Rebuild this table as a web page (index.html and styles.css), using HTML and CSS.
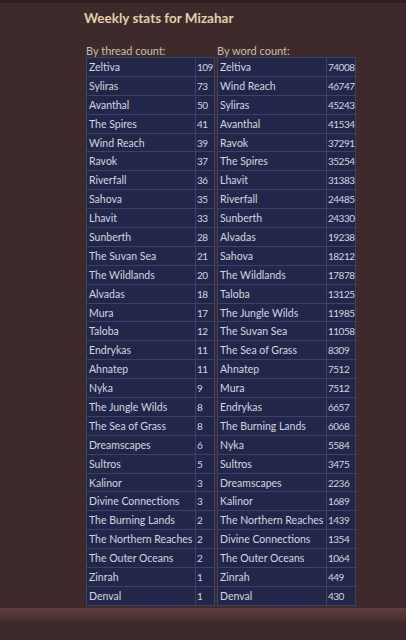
FILE: index.html
```html
<!DOCTYPE html>
<html>
<head>
<meta charset="utf-8">
<link rel="stylesheet" href="styles.css">
</head>
<body>
<div class="topbar"></div>
<main class="content">
  <h1 class="title">Weekly stats for Mizahar</h1>
  <div class="tables">
    <section class="block">
      <div class="label">By thread count:</div>
      <table class="stats thread">
        <tr><td class="name">Zeltiva</td><td class="num">109</td></tr>
        <tr><td class="name">Syliras</td><td class="num">73</td></tr>
        <tr><td class="name">Avanthal</td><td class="num">50</td></tr>
        <tr><td class="name">The Spires</td><td class="num">41</td></tr>
        <tr><td class="name">Wind Reach</td><td class="num">39</td></tr>
        <tr><td class="name">Ravok</td><td class="num">37</td></tr>
        <tr><td class="name">Riverfall</td><td class="num">36</td></tr>
        <tr><td class="name">Sahova</td><td class="num">35</td></tr>
        <tr><td class="name">Lhavit</td><td class="num">33</td></tr>
        <tr><td class="name">Sunberth</td><td class="num">28</td></tr>
        <tr><td class="name">The Suvan Sea</td><td class="num">21</td></tr>
        <tr><td class="name">The Wildlands</td><td class="num">20</td></tr>
        <tr><td class="name">Alvadas</td><td class="num">18</td></tr>
        <tr><td class="name">Mura</td><td class="num">17</td></tr>
        <tr><td class="name">Taloba</td><td class="num">12</td></tr>
        <tr><td class="name">Endrykas</td><td class="num">11</td></tr>
        <tr><td class="name">Ahnatep</td><td class="num">11</td></tr>
        <tr><td class="name">Nyka</td><td class="num">9</td></tr>
        <tr><td class="name">The Jungle Wilds</td><td class="num">8</td></tr>
        <tr><td class="name">The Sea of Grass</td><td class="num">8</td></tr>
        <tr><td class="name">Dreamscapes</td><td class="num">6</td></tr>
        <tr><td class="name">Sultros</td><td class="num">5</td></tr>
        <tr><td class="name">Kalinor</td><td class="num">3</td></tr>
        <tr><td class="name">Divine Connections</td><td class="num">3</td></tr>
        <tr><td class="name">The Burning Lands</td><td class="num">2</td></tr>
        <tr><td class="name">The Northern Reaches</td><td class="num">2</td></tr>
        <tr><td class="name">The Outer Oceans</td><td class="num">2</td></tr>
        <tr><td class="name">Zinrah</td><td class="num">1</td></tr>
        <tr><td class="name">Denval</td><td class="num">1</td></tr>
      </table>
    </section>
    <section class="block">
      <div class="label">By word count:</div>
      <table class="stats word">
        <tr><td class="name">Zeltiva</td><td class="num">74008</td></tr>
        <tr><td class="name">Wind Reach</td><td class="num">46747</td></tr>
        <tr><td class="name">Syliras</td><td class="num">45243</td></tr>
        <tr><td class="name">Avanthal</td><td class="num">41534</td></tr>
        <tr><td class="name">Ravok</td><td class="num">37291</td></tr>
        <tr><td class="name">The Spires</td><td class="num">35254</td></tr>
        <tr><td class="name">Lhavit</td><td class="num">31383</td></tr>
        <tr><td class="name">Riverfall</td><td class="num">24485</td></tr>
        <tr><td class="name">Sunberth</td><td class="num">24330</td></tr>
        <tr><td class="name">Alvadas</td><td class="num">19238</td></tr>
        <tr><td class="name">Sahova</td><td class="num">18212</td></tr>
        <tr><td class="name">The Wildlands</td><td class="num">17878</td></tr>
        <tr><td class="name">Taloba</td><td class="num">13125</td></tr>
        <tr><td class="name">The Jungle Wilds</td><td class="num">11985</td></tr>
        <tr><td class="name">The Suvan Sea</td><td class="num">11058</td></tr>
        <tr><td class="name">The Sea of Grass</td><td class="num">8309</td></tr>
        <tr><td class="name">Ahnatep</td><td class="num">7512</td></tr>
        <tr><td class="name">Mura</td><td class="num">7512</td></tr>
        <tr><td class="name">Endrykas</td><td class="num">6657</td></tr>
        <tr><td class="name">The Burning Lands</td><td class="num">6068</td></tr>
        <tr><td class="name">Nyka</td><td class="num">5584</td></tr>
        <tr><td class="name">Sultros</td><td class="num">3475</td></tr>
        <tr><td class="name">Dreamscapes</td><td class="num">2236</td></tr>
        <tr><td class="name">Kalinor</td><td class="num">1689</td></tr>
        <tr><td class="name">The Northern Reaches</td><td class="num">1439</td></tr>
        <tr><td class="name">Divine Connections</td><td class="num">1354</td></tr>
        <tr><td class="name">The Outer Oceans</td><td class="num">1064</td></tr>
        <tr><td class="name">Zinrah</td><td class="num">449</td></tr>
        <tr><td class="name">Denval</td><td class="num">430</td></tr>
      </table>
    </section>
  </div>
</main>
<div class="footer"></div>
</body>
</html>
```
FILE: styles.css
```css
html, body {
  margin: 0;
  padding: 0;
  background: #3f2a2b;
  height: 640px;
  overflow: hidden;
}
body {
  font-family: Lato, "Noto Sans", sans-serif;
}
.topbar {
  height: 3px;
  background: #2d1e1f;
}
.content {
  padding: 7px 0 0 84px;
}
.title {
  margin: 0;
  font-family: Lato, sans-serif;
  font-weight: bold;
  font-size: 13.5px;
  line-height: 17px;
  color: #e2d0a9;
}
.tables {
  display: flex;
  gap: 2px;
  margin-top: 17px;
  padding-left: 2px;
}
.label {
  font-size: 11px;
  line-height: 13px;
  color: #c9bdb5;
}
.stats {
  border-collapse: collapse;
  table-layout: fixed;
  background: #222749;
  border: 1px solid #555a7c;
}
.thread { width: 129px; }
.word { width: 139px; }
.stats td {
  border: 1px solid #3d4268;
  height: 17.9px;
  padding: 0 0 0 2px;
  font-size: 10.5px;
  color: #d4d6e0;
  white-space: nowrap;
  overflow: hidden;
}
.stats td.num {
  border-left: 1px solid #656a88;
  padding-left: 1px;
  font-size: 10px;
  letter-spacing: -0.5px;
  overflow: visible;
}
.thread .num { width: 17px; }
.word .num { width: 27px; }
.footer {
  height: 13px;
  margin-top: 2px;
  background: linear-gradient(#5f3d3c, #4a302f);
}
```
